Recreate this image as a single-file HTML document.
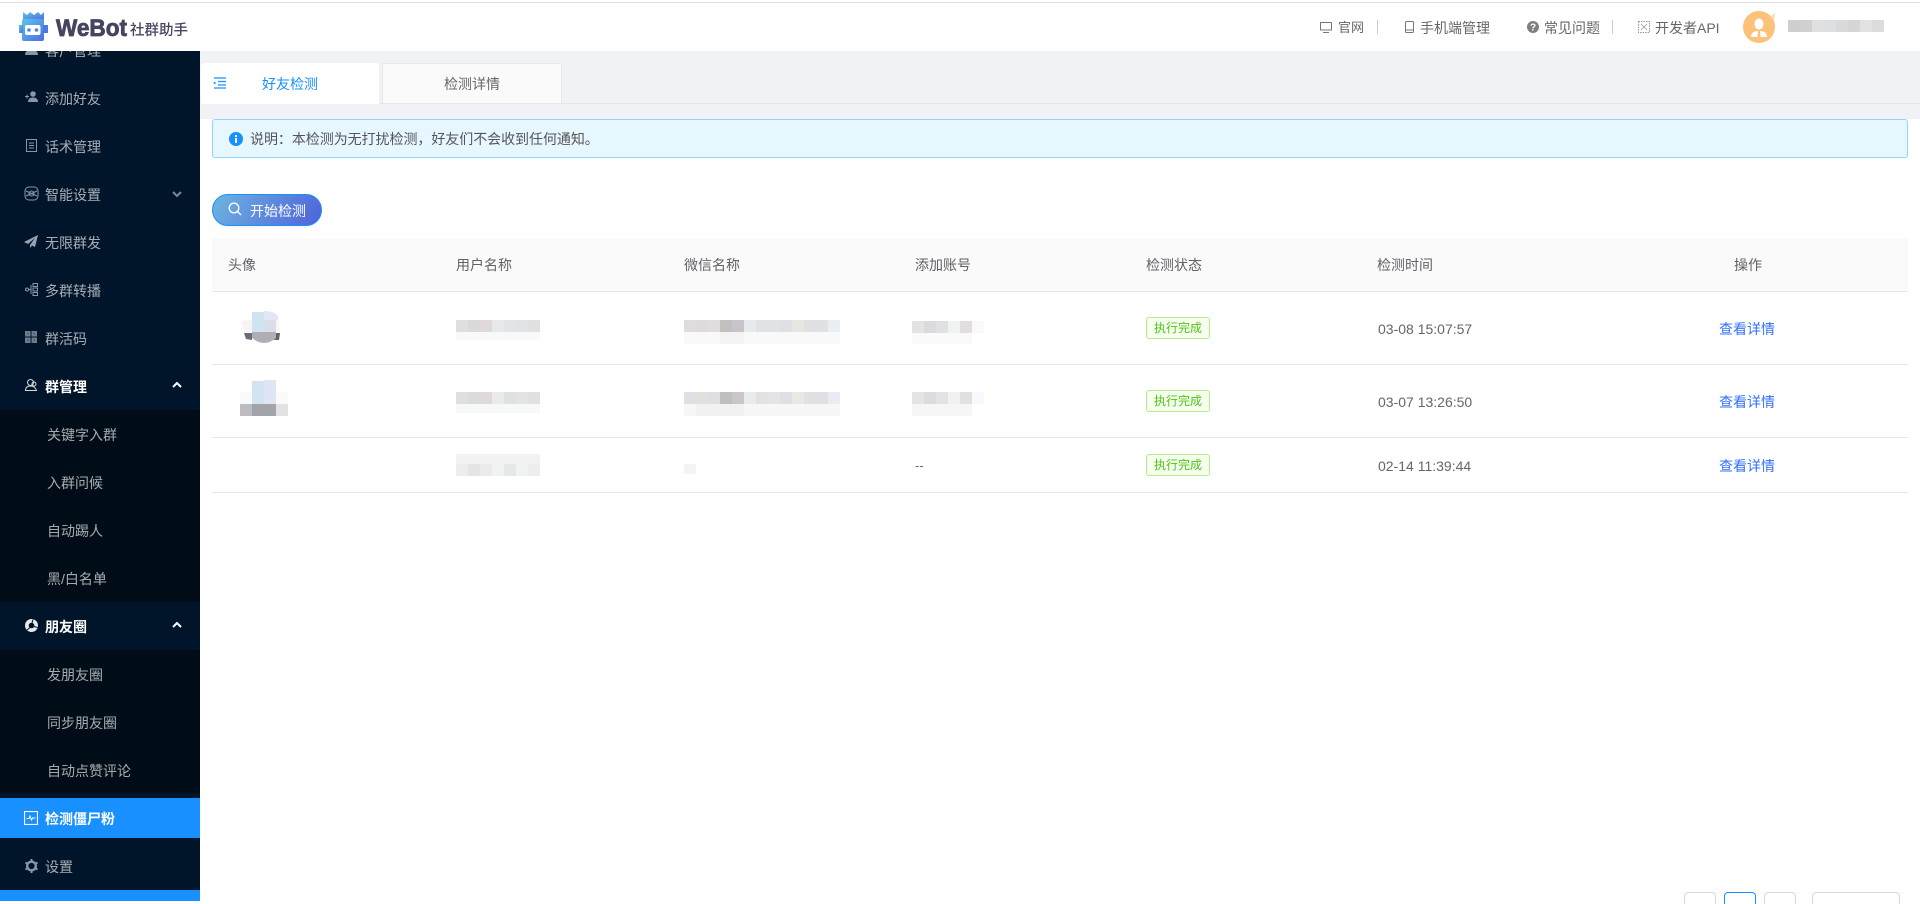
<!DOCTYPE html>
<html lang="zh-CN"><head><meta charset="utf-8"><title>WeBot</title>
<style>
*{box-sizing:border-box;margin:0;padding:0}
html,body{width:1920px;height:901px;overflow:hidden;background:#fff;font-family:"Liberation Sans","Noto Sans CJK SC",sans-serif;font-size:14px;color:#606266}
.a{position:absolute;white-space:nowrap}
.t{position:absolute;white-space:nowrap;line-height:20px;height:20px;margin-top:1px}
#side{position:absolute;left:0;top:51px;width:200px;height:850px;background:#001529;overflow:hidden}
#side .t{color:rgba(255,255,255,.65)}
#side .w{color:#fff;font-weight:700}
#side svg{position:absolute}
.sub{position:absolute;left:0;width:200px;background:#000c17}
.tag{position:absolute;left:1146px;width:64px;height:22px;border:1px solid #b7eb8f;background:#f6ffed;border-radius:3px;color:#52c41a;font-size:12px;line-height:20px;text-align:center}
.line{position:absolute;left:212px;width:1696px;height:1px;background:#e8e8e8}
.lnk{position:absolute;left:1719px;color:#3370ff;line-height:20px;font-size:14px;margin-top:1px}
.time{position:absolute;left:1378px;line-height:20px;font-size:14px;color:#666;margin-top:1px}
.th{position:absolute;top:255px;line-height:20px;font-size:14px;color:#606266}
.pg{position:absolute;top:892px;height:12px;border:1px solid #d9d9d9;border-bottom:0;border-radius:4px 4px 0 0;background:#fff}
</style></head><body>

<!-- header -->
<div class="a" style="left:0;top:0;width:1920px;height:51px;background:#fff"></div>
<div class="a" style="left:0;top:2px;width:1920px;height:1px;background:#dedede"></div>

<svg class="a" style="left:18px;top:11px" width="32" height="31" viewBox="0 0 32 31">
<defs><linearGradient id="lg" x1="0" y1="0" x2="1" y2="1"><stop offset="0" stop-color="#5cc3ec"/><stop offset="1" stop-color="#4c6fe0"/></linearGradient></defs>
<path d="M5 1l4 3 3-3 4 3 4-3 3 3 3-3v8H5z" fill="url(#lg)"/>
<rect x="4" y="8" width="22" height="22" rx="2" fill="url(#lg)"/>
<rect x="1" y="14" width="4" height="8" fill="url(#lg)"/><rect x="25" y="14" width="5" height="8" fill="#4c78e4"/>
<rect x="7" y="14" width="15.500" height="10" rx="2" fill="#fff"/>
<circle cx="11" cy="19" r="1.800" fill="#4a86e4"/><circle cx="18.500" cy="19" r="1.800" fill="#4a86e4"/>
</svg>
<div class="a" style="left:56px;top:15px;font-size:24px;line-height:28px;font-weight:700;color:#45455f;-webkit-text-stroke:.8px #45455f;transform:scaleX(.94);transform-origin:0 50%">WeBot</div>
<div class="a" style="left:130px;top:20px;font-size:14.500px;line-height:22px;color:#45455f;font-weight:500">社群助手</div>

<svg class="a" style="left:1320px;top:22px" width="12" height="11" viewBox="0 0 12 11" fill="none" stroke="#777"><rect x=".5" y=".5" width="11" height="7.500"/><path d="M3 10.500h6"/></svg>
<div class="t" style="left:1338px;top:17px;font-size:13px;color:#666">官网</div>
<div class="a" style="left:1377px;top:20px;width:1px;height:14px;background:#ccc"></div>
<svg class="a" style="left:1405px;top:21px" width="9" height="12" viewBox="0 0 9 12" fill="none" stroke="#777"><rect x=".5" y=".5" width="8" height="11" rx="1"/><path d="M1 9h7"/></svg>
<div class="t" style="left:1420px;top:17px;color:#666">手机端管理</div>
<svg class="a" style="left:1527px;top:21px" width="12" height="12" viewBox="0 0 12 12"><circle cx="6" cy="6" r="6" fill="#808080"/><text x="6" y="9.500" font-size="10" font-weight="700" text-anchor="middle" fill="#fff" font-family="Liberation Sans">?</text></svg>
<div class="t" style="left:1544px;top:17px;color:#666">常见问题</div>
<div class="a" style="left:1612px;top:20px;width:1px;height:14px;background:#ccc"></div>
<svg class="a" style="left:1638px;top:21px" width="12" height="12" viewBox="0 0 12 12" fill="none" stroke="#999"><rect x=".5" y=".5" width="11" height="11" stroke-dasharray="1.500 1"/><path d="M3 3l6 6M9 3L3 9" stroke-width=".8"/></svg>
<div class="t" style="left:1655px;top:17px;color:#666">开发者API</div>
<svg class="a" style="left:1743px;top:11px" width="33" height="32" viewBox="0 0 33 32"><circle cx="16" cy="16" r="16" fill="#fdc27a"/><path d="M27 6l5-4-1 8z" fill="#fbd9ae"/><ellipse cx="16" cy="13" rx="4.500" ry="5.500" fill="#fff"/><path d="M8 26c0-5 4-6 8-6s8 1 8 6z" fill="#fff"/><path d="M15 20h2l.5 6h-3z" fill="#fdc27a"/></svg>
<svg class="a" style="left:1788px;top:20px" width="96" height="12" shape-rendering="crispEdges">
<rect x="0" width="12" height="12" fill="#cfcfcf"/><rect x="12" width="12" height="12" fill="#d0d0d0"/><rect x="24" width="12" height="12" fill="#e0e0e0"/><rect x="36" width="12" height="12" fill="#dedfe0"/><rect x="48" width="12" height="12" fill="#d9dadb"/><rect x="60" width="12" height="12" fill="#d6d6d6"/><rect x="72" width="12" height="12" fill="#e2e2e3"/><rect x="84" width="12" height="12" fill="#dcdcdd"/></svg>

<!-- sidebar -->
<div id="side">
 <div class="sub" style="top:359px;height:192px"></div>
 <div class="sub" style="top:599px;height:143px"></div>
 <div class="a" style="left:0;top:747px;width:200px;height:40px;background:#1890ff"></div>
 <div class="a" style="left:0;top:839px;width:200px;height:11px;background:#1890ff"></div>

 <svg style="left:25px;top:-9px" width="13" height="13" viewBox="0 0 13 13" fill="#8a96a3"><circle cx="6.500" cy="3" r="3"/><path d="M0 13c0-4 3-5 6.500-5S13 9 13 13z"/></svg>
 <div class="t" style="left:45px;top:-11px">客户管理</div>

 <svg style="left:25px;top:40px" width="13" height="12" viewBox="0 0 13 12" fill="#8a96a3"><circle cx="8" cy="3" r="2.800"/><path d="M3 11c0-3 2-4.500 5-4.500s5 1.500 5 4.500z"/><path d="M0 5h4v1H0zM1.500 3.500h1v4h-1z"/></svg>
 <div class="t" style="left:45px;top:37px">添加好友</div>

 <svg style="left:26px;top:88px" width="11" height="13" viewBox="0 0 11 13" fill="none" stroke="#8a96a3"><rect x=".5" y=".5" width="10" height="12"/><path d="M3 4h5M3 6.500h5M3 9h5"/></svg>
 <div class="t" style="left:45px;top:85px">话术管理</div>

 <svg style="left:24px;top:135px" width="15" height="15" viewBox="0 0 15 15" fill="none" stroke="#8a96a3"><rect x="1" y="1" width="13" height="13" rx="4"/><circle cx="7.500" cy="7.500" r="2.500"/><path d="M2 5l11 5M2 10l11-5"/></svg>
 <div class="t" style="left:45px;top:133px">智能设置</div>
 <svg style="left:172px;top:140px" width="10" height="7" viewBox="0 0 10 7" fill="none" stroke="#7d8894" stroke-width="2"><path d="M1 1l4 4 4-4"/></svg>

 <svg style="left:24px;top:184px" width="14" height="13" viewBox="0 0 14 13" fill="#9aa3ad"><path d="M14 0L0 7l4 2 7-6-5 7v3l2-2.500 3 1.500z"/></svg>
 <div class="t" style="left:45px;top:181px">无限群发</div>

 <svg style="left:25px;top:232px" width="13" height="13" viewBox="0 0 13 13" fill="none" stroke="#8a96a3"><circle cx="2" cy="6.500" r="1.500"/><path d="M3.500 6.500H6M6 2v9"/><rect x="8" y=".5" width="4.500" height="3"/><rect x="8" y="5" width="4.500" height="3"/><rect x="8" y="9.500" width="4.500" height="3"/></svg>
 <div class="t" style="left:45px;top:229px">多群转播</div>

 <svg style="left:25px;top:280px" width="12" height="12" viewBox="0 0 12 12" fill="#6f7c89"><path d="M0 0h5.500v5.500H0zM6.500 0H12v5.500H6.500zM0 6.500h5.500V12H0zM6.500 6.500H12V12H6.500z"/><path d="M2 2h1.500v1.500H2zM8.500 2H10v1.500H8.500zM2 8.500h1.500V10H2zM8.500 8.500H10V10H8.500z" fill="#4a5866"/></svg>
 <div class="t" style="left:45px;top:277px">群活码</div>

 <svg style="left:25px;top:328px" width="13" height="12" viewBox="0 0 13 12" fill="none" stroke="#d5d9dd"><circle cx="5.500" cy="3.500" r="3"/><circle cx="9" cy="5" r="2"/><path d="M.5 11.500c0-3 2-4.500 5-4.500s5 1.500 6 4.500z"/></svg>
 <div class="t w" style="left:45px;top:325px">群管理</div>
 <svg style="left:172px;top:330px" width="10" height="7" viewBox="0 0 10 7" fill="none" stroke="#fff" stroke-width="2"><path d="M1 6l4-4 4 4"/></svg>

 <div class="t" style="left:47px;top:373px">关键字入群</div>
 <div class="t" style="left:47px;top:421px">入群问候</div>
 <div class="t" style="left:47px;top:469px">自动踢人</div>
 <div class="t" style="left:47px;top:517px">黑/白名单</div>

 <svg style="left:25px;top:568px" width="13" height="13" viewBox="0 0 13 13"><circle cx="6.500" cy="6.500" r="6.500" fill="#e8eaec"/><circle cx="6.500" cy="6.500" r="2.800" fill="#001529"/><path d="M8 .5L7 4M12.500 8.500L9 7.500M2 11l3-2.500" stroke="#001529" stroke-width="1" fill="none"/></svg>
 <div class="t w" style="left:45px;top:565px">朋友圈</div>
 <svg style="left:172px;top:570px" width="10" height="7" viewBox="0 0 10 7" fill="none" stroke="#fff" stroke-width="2"><path d="M1 6l4-4 4 4"/></svg>

 <div class="t" style="left:47px;top:613px">发朋友圈</div>
 <div class="t" style="left:47px;top:661px">同步朋友圈</div>
 <div class="t" style="left:47px;top:709px">自动点赞评论</div>

 <svg style="left:24px;top:760px" width="14" height="14" viewBox="0 0 14 14" fill="none" stroke="#fff"><rect x=".5" y=".5" width="13" height="13" stroke-width="1.200"/><path d="M2.500 7.500h2.500l1-2.500 1.500 4 1-2h3"/></svg>
 <div class="t w" style="left:45px;top:757px">检测僵尸粉</div>

 <svg style="left:25px;top:808px" width="13" height="14" viewBox="0 0 13 14"><circle cx="6.500" cy="7" r="4.300" fill="none" stroke="#8a96a3" stroke-width="2.400"/><path d="M6.500 0v2.500M6.500 11.500V14M.5 3.500l2 1.200M10.500 9.300l2 1.200M.5 10.500l2-1.200M10.500 4.700l2-1.200" stroke="#8a96a3" stroke-width="2"/></svg>
 <div class="t" style="left:45px;top:805px">设置</div>
</div>

<!-- tab bar -->
<div class="a" style="left:200px;top:51px;width:1720px;height:68px;background:#f0f2f5"></div>
<div class="a" style="left:200px;top:103px;width:1720px;height:1px;background:#e4e6ea"></div>
<div class="a" style="left:201px;top:63px;width:178px;height:41px;background:#fff;border-radius:3px 3px 0 0"></div>
<svg class="a" style="left:213px;top:77px" width="14" height="12" viewBox="0 0 14 12" fill="none" stroke="#1890ff" stroke-width="1.300"><path d="M1 1h12M5 4.500h8M5 8h8M1 11h12"/><path d="M0 6l2.500-1.500v3z" fill="#1890ff" stroke="none"/></svg>
<div class="t" style="left:262px;top:73px;color:#1890ff">好友检测</div>
<div class="a" style="left:382px;top:63px;width:180px;height:41px;background:#fafafa;border:1px solid #e8e8e8;border-radius:3px 3px 0 0"></div>
<div class="t" style="left:444px;top:73px;font-size:14px;color:#666">检测详情</div>

<!-- alert -->
<div class="a" style="left:212px;top:119px;width:1696px;height:39px;background:#e6f7ff;border:1px solid #91d5ff;border-radius:3px"></div>
<svg class="a" style="left:229px;top:132px" width="14" height="14" viewBox="0 0 14 14"><circle cx="7" cy="7" r="7" fill="#1890ff"/><rect x="6" y="6" width="2" height="5" fill="#fff"/><rect x="6" y="3" width="2" height="2" fill="#fff"/></svg>
<div class="t" style="left:250px;top:128px;font-size:14px;color:#555;letter-spacing:-.05px">说明：本检测为无打扰检测，好友们不会收到任何通知。</div>

<!-- button -->
<div class="a" style="left:212px;top:194px;width:110px;height:32px;border-radius:16px;background:linear-gradient(120deg,#6db4e0,#4f62da);border:1px solid #1890ff;box-shadow:0 2px 0 rgba(0,0,0,.03)"></div>
<svg class="a" style="left:228px;top:202px" width="14" height="14" viewBox="0 0 14 14" fill="none" stroke="#fff" stroke-width="1.300"><circle cx="6" cy="6" r="4.800"/><path d="M9.500 9.500L13 13"/></svg>
<div class="t" style="left:250px;top:200px;color:#fff">开始检测</div>

<!-- table -->
<div class="a" style="left:212px;top:238px;width:1696px;height:53px;background:#fafafa"></div>
<div class="line" style="top:291px"></div>
<div class="line" style="top:364px"></div>
<div class="line" style="top:437px"></div>
<div class="line" style="top:492px"></div>
<div class="th" style="left:228px">头像</div>
<div class="th" style="left:456px">用户名称</div>
<div class="th" style="left:684px">微信名称</div>
<div class="th" style="left:915px">添加账号</div>
<div class="th" style="left:1146px">检测状态</div>
<div class="th" style="left:1377px">检测时间</div>
<div class="th" style="left:1734px">操作</div>

<!-- mosaics -->
<svg class="a" style="left:0;top:0" width="1920" height="901">
<!-- row1 avatar -->
<path d="M241 322q0-2 11-2v12h-8z" fill="#f5f5f6"/>
<path d="M252 312h12v20h-12z" fill="#cfe3f0"/><path d="M264 311q12 0 14 6l2 15h-4v0h-12z" fill="#e2e7f5"/><rect x="264" y="320" width="12" height="12" fill="#dadeea"/><path d="M276 320h3l1 12h-4z" fill="#f6f6f7"/>
<path d="M244 333h8v7l-6-1z" fill="#6c6c78"/><path d="M276 333h4l-1 7-5 0z" fill="#62626e"/>
<path d="M252 332h24v6q-6 5-12 5t-12-5z" fill="#aeaeb4"/>
<g shape-rendering="crispEdges">
<!-- row1 name -->
<rect x="456" y="320" width="12" height="12" fill="#e0dfe0"/><rect x="468" y="320" width="12" height="12" fill="#d9dadb"/><rect x="480" y="320" width="12" height="12" fill="#dfd9dc"/><rect x="492" y="320" width="12" height="12" fill="#e6e9e9"/><rect x="504" y="320" width="12" height="12" fill="#e3e4e5"/><rect x="516" y="320" width="12" height="12" fill="#e2e3e4"/><rect x="528" y="320" width="12" height="12" fill="#dfe1e2"/>
<rect x="456" y="332" width="84" height="8" fill="#f9f9f9"/>
<!-- row1 wx -->
<rect x="684" y="320" width="12" height="12" fill="#dfdcde"/><rect x="696" y="320" width="12" height="12" fill="#dddcda"/><rect x="708" y="320" width="12" height="12" fill="#e0dde1"/><rect x="720" y="320" width="12" height="12" fill="#c2bfbf"/><rect x="732" y="320" width="12" height="12" fill="#c9c4cb"/><rect x="744" y="320" width="12" height="12" fill="#e6eaed"/><rect x="756" y="320" width="12" height="12" fill="#e0e2e3"/><rect x="768" y="320" width="12" height="12" fill="#e1e2e4"/><rect x="780" y="320" width="12" height="12" fill="#dfe0e5"/><rect x="792" y="320" width="12" height="12" fill="#e8e6e2"/><rect x="804" y="320" width="12" height="12" fill="#e0e0e2"/><rect x="816" y="320" width="12" height="12" fill="#e0e1e3"/><rect x="828" y="320" width="12" height="12" fill="#e9eef2"/>
<rect x="684" y="332" width="156" height="12" fill="#f9f9f9"/><rect x="720" y="332" width="24" height="12" fill="#f3f3f3"/>
<!-- row1 acc -->
<rect x="912" y="321" width="12" height="12" fill="#e5e3e2"/><rect x="924" y="321" width="12" height="12" fill="#dbdbde"/><rect x="936" y="321" width="12" height="12" fill="#e0e1e2"/><rect x="948" y="321" width="12" height="12" fill="#f1f3f3"/><rect x="960" y="321" width="12" height="12" fill="#e3dede"/><rect x="972" y="321" width="12" height="12" fill="#f8f9fd"/>
<rect x="912" y="333" width="60" height="11" fill="#f9fafa"/>

<!-- row2 avatar -->
<rect x="240" y="392" width="12" height="12" fill="#f9fafb"/>
<rect x="252" y="381" width="12" height="23" fill="#d2e4f0"/><rect x="264" y="380" width="12" height="24" fill="#dfe5f5"/><rect x="276" y="392" width="12" height="12" fill="#fafafb"/>
<rect x="240" y="404" width="12" height="12" fill="#bcbcc2"/><rect x="252" y="404" width="24" height="12" fill="#a3a3aa"/><rect x="276" y="404" width="12" height="12" fill="#e2e2e4"/>
<!-- row2 name -->
<rect x="456" y="392" width="12" height="12" fill="#e0dfe0"/><rect x="468" y="392" width="12" height="12" fill="#dadbdc"/><rect x="480" y="392" width="12" height="12" fill="#dfd9dc"/><rect x="492" y="392" width="12" height="12" fill="#e8ebeb"/><rect x="504" y="392" width="12" height="12" fill="#dfe1e2"/><rect x="516" y="392" width="12" height="12" fill="#e2e3e4"/><rect x="528" y="392" width="12" height="12" fill="#e0e1e2"/>
<rect x="456" y="404" width="84" height="9" fill="#f7f8f8"/>
<!-- row2 wx -->
<rect x="684" y="392" width="12" height="12" fill="#e0dfe3"/><rect x="696" y="392" width="12" height="12" fill="#e0e1dc"/><rect x="708" y="392" width="12" height="12" fill="#dfdee2"/><rect x="720" y="392" width="12" height="12" fill="#c0bebe"/><rect x="732" y="392" width="12" height="12" fill="#c9c5cb"/><rect x="744" y="392" width="12" height="12" fill="#e8eced"/><rect x="756" y="392" width="12" height="12" fill="#e0e2e3"/><rect x="768" y="392" width="12" height="12" fill="#e3e4e6"/><rect x="780" y="392" width="12" height="12" fill="#dfe0e6"/><rect x="792" y="392" width="12" height="12" fill="#e8e8e5"/><rect x="804" y="392" width="12" height="12" fill="#e1e1e3"/><rect x="816" y="392" width="12" height="12" fill="#e1e1e3"/><rect x="828" y="392" width="12" height="12" fill="#eaecf3"/>
<rect x="684" y="404" width="156" height="12" fill="#f7f7f7"/><rect x="696" y="404" width="48" height="12" fill="#f1f1f1"/>
<!-- row2 acc -->
<rect x="912" y="392" width="12" height="12" fill="#e6e4e3"/><rect x="924" y="392" width="12" height="12" fill="#dcdce0"/><rect x="936" y="392" width="12" height="12" fill="#e2e3e4"/><rect x="948" y="392" width="12" height="12" fill="#f0f2f2"/><rect x="960" y="392" width="12" height="12" fill="#e3e1dd"/><rect x="972" y="392" width="12" height="12" fill="#f6f9fd"/>
<rect x="912" y="404" width="60" height="12" fill="#f6f6f6"/>

<!-- row3 name -->
<rect x="456" y="454" width="84" height="10" fill="#f2f2f3"/>
<rect x="456" y="464" width="12" height="12" fill="#ededee"/><rect x="468" y="464" width="12" height="12" fill="#e4e5e4"/><rect x="480" y="464" width="12" height="12" fill="#eceaeb"/><rect x="492" y="464" width="12" height="12" fill="#f1f2f2"/><rect x="504" y="464" width="12" height="12" fill="#e6e8e8"/><rect x="516" y="464" width="12" height="12" fill="#f1f2f2"/><rect x="528" y="464" width="12" height="12" fill="#ebedee"/>
<rect x="684" y="464" width="12" height="10" fill="#f4f4f4"/>
</g>
</svg>
<div class="a" style="left:915px;top:456px;font-size:13px;line-height:20px;color:#666">--</div>

<div class="tag" style="top:317px">执行完成</div>
<div class="tag" style="top:390px">执行完成</div>
<div class="tag" style="top:454px">执行完成</div>
<div class="time" style="top:318px">03-08 15:07:57</div>
<div class="time" style="top:391px">03-07 13:26:50</div>
<div class="time" style="top:455px">02-14 11:39:44</div>
<div class="lnk" style="top:318px">查看详情</div>
<div class="lnk" style="top:391px">查看详情</div>
<div class="lnk" style="top:455px">查看详情</div>

<div class="pg" style="left:1684px;width:32px"></div>
<div class="pg" style="left:1724px;width:32px;border-color:#1890ff"></div>
<div class="pg" style="left:1764px;width:32px"></div>
<div class="pg" style="left:1812px;width:88px"></div>
</body></html>
